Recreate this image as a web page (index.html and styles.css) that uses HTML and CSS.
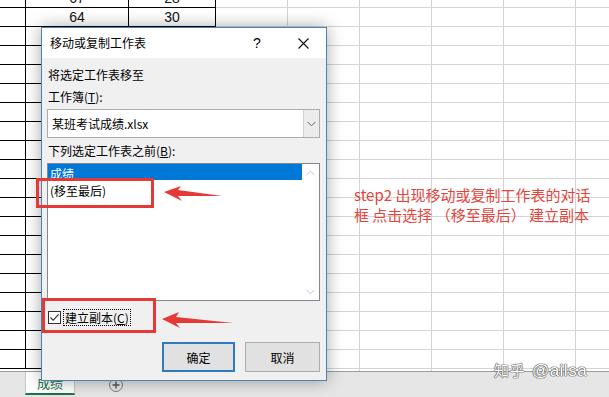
FILE: index.html
```html
<!DOCTYPE html>
<html lang="zh-CN">
<head>
<meta charset="utf-8">
<title>移动或复制工作表</title>
<link rel="stylesheet" href="styles.css">
</head>
<body>
<div class="app">
  <div class="sheet">
    <div class="data">
      <span class="cell"></span><span class="cell num">67</span><span class="cell num">28</span>
      <span class="cell"></span><span class="cell num">64</span><span class="cell num">30</span>
      <span class="cell"></span><span class="cell"></span><span class="cell"></span>
      <span class="cell"></span><span class="cell"></span><span class="cell"></span>
      <span class="cell"></span><span class="cell"></span><span class="cell"></span>
      <span class="cell"></span><span class="cell"></span><span class="cell"></span>
      <span class="cell"></span><span class="cell"></span><span class="cell"></span>
      <span class="cell"></span><span class="cell"></span><span class="cell"></span>
      <span class="cell"></span><span class="cell"></span><span class="cell"></span>
      <span class="cell"></span><span class="cell"></span><span class="cell"></span>
      <span class="cell"></span><span class="cell"></span><span class="cell"></span>
      <span class="cell"></span><span class="cell"></span><span class="cell"></span>
      <span class="cell"></span><span class="cell"></span><span class="cell"></span>
      <span class="cell"></span><span class="cell"></span><span class="cell"></span>
      <span class="cell"></span><span class="cell"></span><span class="cell"></span>
      <span class="cell"></span><span class="cell"></span><span class="cell"></span>
      <span class="cell"></span><span class="cell"></span><span class="cell"></span>
      <span class="cell"></span><span class="cell"></span><span class="cell"></span>
      <span class="cell"></span><span class="cell"></span><span class="cell"></span>
      <span class="cell"></span><span class="cell"></span><span class="cell"></span>
    </div>
  </div>
  <div class="tabbar">
    <div class="tab">成绩</div>
    <div class="add">
      <svg width="14" height="14" viewBox="0 0 14 14"><circle cx="7" cy="7" r="6.5" fill="none" stroke="#7a7a7a"/><path d="M7 3.5v7M3.5 7h7" stroke="#555" stroke-width="1.4"/></svg>
    </div>
  </div>
</div>

<div class="dialog">
  <div class="titlebar">
    <div class="title">移动或复制工作表</div>
    <div class="tbtn help">?</div>
    <div class="tbtn close">
      <svg width="11" height="11" viewBox="0 0 11 11"><path d="M0.5 0.5L10.5 10.5M10.5 0.5L0.5 10.5" stroke="#111" stroke-width="1.1"/></svg>
    </div>
  </div>
  <div class="dbody">
    <div class="label">将选定工作表移至</div>
    <div class="label gap2">工作簿(<u>T</u>):</div>
    <div class="combo">
      <div class="combo-text">某班考试成绩.xlsx</div>
      <div class="combo-btn">
        <svg width="9" height="6" viewBox="0 0 9 6"><path d="M0.5 0.8L4.5 4.8L8.5 0.8" fill="none" stroke="#606060"/></svg>
      </div>
    </div>
    <div class="label gap3">下列选定工作表之前(<u>B</u>):</div>
    <div class="listbox">
      <div class="items">
        <div class="item sel">成绩</div>
        <div class="item">(移至最后)</div>
      </div>
      <div class="scroll">
        <svg width="9" height="6" viewBox="0 0 9 6"><path d="M0.5 5.2L4.5 1.2L8.5 5.2" fill="none" stroke="#c2c2c2"/></svg>
        <svg width="9" height="6" viewBox="0 0 9 6"><path d="M0.5 0.8L4.5 4.8L8.5 0.8" fill="none" stroke="#c2c2c2"/></svg>
      </div>
    </div>
    <div class="check-row">
      <span class="checkbox">
        <svg width="11" height="11" viewBox="0 0 11 11"><path d="M1.5 5.5L4.2 8.3L9.6 2.4" fill="none" stroke="#222" stroke-width="1.1"/></svg>
      </span>
      <span class="check-label">建立副本(<u>C</u>)</span>
    </div>
    <div class="buttons">
      <div class="btn ok">确定</div>
      <div class="btn cancel">取消</div>
    </div>
  </div>
</div>

<div class="mark box1"></div>
<div class="mark box2"></div>
<svg class="arrow arrow1" width="66" height="22" viewBox="0 0 66 22"><polygon points="4,9 21,3 18,7 62,13 18,13 22,18" fill="#e53935"/></svg>
<svg class="arrow arrow2" width="80" height="24" viewBox="0 0 80 24"><polygon points="4,11 21,4 18,9 75,15 18,15 22,20" fill="#e53935"/></svg>

<div class="note">
  <div>step2 出现移动或复制工作表的对话</div>
  <div>框 点击选择 （移至最后） 建立副本</div>
</div>

<div class="watermark">知乎 <span class="wm-latin">@ailsa</span></div>
</body>
</html>
```

FILE: styles.css
```css
* { box-sizing: border-box; }
html, body { margin: 0; padding: 0; }
body {
  width: 609px;
  height: 397px;
  overflow: hidden;
  position: relative;
  background: #fff;
  font-family: "Noto Sans CJK SC", "Microsoft YaHei", sans-serif;
  color: #000;
}

/* spreadsheet */
.sheet {
  height: 371px;
  overflow: hidden;
  background-color: #fff;
  background-image:
    linear-gradient(to right, transparent 71px, #d4d4d4 71px),
    linear-gradient(to bottom, transparent 18px, #d4d4d4 18px);
  background-size: 72px 100%, 100% 19px;
  background-position: 0 0, 0 8px;
  background-repeat: repeat-x, repeat-y;
}
.data {
  display: grid;
  grid-template-columns: 26px 103px 87px;
  grid-auto-rows: 19px;
  width: 216px;
  margin-top: -11px;
  background: #fff;
}
.cell {
  border-right: 1px solid #000;
  border-bottom: 1px solid #000;
}
.num {
  font: 14px/18px "Liberation Sans", Arial, sans-serif;
  text-align: center;
  color: #111;
}

.tabbar {
  height: 26px;
  border-top: 1px solid #9c9c9c;
  background: #e6e6e6;
  display: flex;
  align-items: flex-start;
}
.tab {
  margin-left: 25px;
  width: 50px;
  height: 23px;
  background: #fff;
  border-left: 1px solid #c8c8c8;
  border-right: 1px solid #c8c8c8;
  border-bottom: 2px solid #217346;
  color: #217346;
  font-size: 13px;
  line-height: 21px;
  text-align: center;
}
.add {
  margin-left: 34px;
  margin-top: 6px;
  width: 14px;
  height: 14px;
  display: flex;
}

/* dialog */
.dialog {
  position: absolute;
  left: 41px;
  top: 27px;
  width: 286px;
  height: 354px;
  border: 1px solid #4a83b7;
  background: #f0f0f0;
  box-shadow: 0 0 16px rgba(0, 0, 0, 0.35);
  font-size: 12px;
  z-index: 2;
}
.titlebar {
  height: 30px;
  background: #fff;
  display: flex;
  align-items: center;
}
.title {
  flex: 1;
  padding-left: 8px;
  line-height: 30px;
}
.tbtn {
  width: 46px;
  height: 30px;
  display: flex;
  align-items: center;
  justify-content: center;
}
.help {
  font: 14px "Liberation Sans", Arial, sans-serif;
}
.dbody {
  padding: 7px 6px 0 5px;
}
.label {
  height: 20px;
  line-height: 20px;
  padding-left: 1px;
}
.gap2 { margin-top: 2px; }
.gap3 { margin-top: 3px; }
.label u, .check-label u { text-decoration: underline; text-underline-offset: 1px; }

.combo {
  margin-top: 2px;
  height: 29px;
  border: 1px solid #acacac;
  background: #fff;
  display: flex;
}
.combo-text {
  flex: 1;
  padding-left: 4px;
  line-height: 27px;
}
.combo-btn {
  width: 16px;
  border-left: 1px solid #d0d0d0;
  background: #ececec;
  display: flex;
  align-items: center;
  justify-content: center;
}

.listbox {
  margin-top: 2px;
  height: 138px;
  border: 1px solid #828790;
  background: #fff;
  display: flex;
}
.items {
  flex: 1;
  overflow: hidden;
}
.item {
  line-height: 22px;
  padding-left: 2px;
}
.item.sel {
  height: 16px;
  line-height: 19px;
  overflow: hidden;
  background: #0078d7;
  color: #fff;
}
.scroll {
  width: 17px;
  display: flex;
  flex-direction: column;
  justify-content: space-between;
  align-items: center;
  padding: 6px 0 5px;
}

.check-row {
  margin-top: 6px;
  height: 20px;
  display: flex;
  align-items: center;
  padding-left: 1px;
}
.checkbox {
  width: 13px;
  height: 13px;
  border: 1px solid #333;
  background: #fff;
  display: flex;
}
.check-label {
  margin-left: 2px;
  border: 1px dotted #000;
  padding: 0 1px;
  line-height: 15px;
}

.buttons {
  margin-top: 15px;
  display: flex;
  justify-content: flex-end;
  gap: 10px;
}
.btn {
  height: 30px;
  background: #e1e1e1;
  border: 1px solid #adadad;
  display: flex;
  align-items: center;
  justify-content: center;
}
.btn.ok {
  width: 73px;
  border: 2px solid #2f7bbf;
}
.btn.cancel {
  width: 75px;
}

/* annotations */
.mark {
  position: absolute;
  border: 3px solid #e53935;
  z-index: 3;
}
.box1 { left: 36px; top: 178px; width: 118px; height: 30px; }
.box2 { left: 42px; top: 298px; width: 114px; height: 35px; }
.arrow { position: absolute; z-index: 3; }
.arrow1 { left: 160px; top: 183px; }
.arrow2 { left: 158px; top: 308px; }

.note {
  position: absolute;
  left: 354px;
  top: 185px;
  font-size: 15px;
  line-height: 20px;
  color: #e5453d;
  white-space: nowrap;
}

.watermark {
  position: absolute;
  left: 494px;
  top: 359px;
  font-size: 15px;
  line-height: 22px;
  color: #fff;
  letter-spacing: 0.5px;
  text-shadow: 0 0 1px #555, 0 0 1px #555, 0 0 1px #555, 0 0 1px #555;
  z-index: 3;
}
.wm-latin {
  font-family: "Liberation Sans", Arial, sans-serif;
  font-size: 17px;
  margin-left: 3px;
}
```
